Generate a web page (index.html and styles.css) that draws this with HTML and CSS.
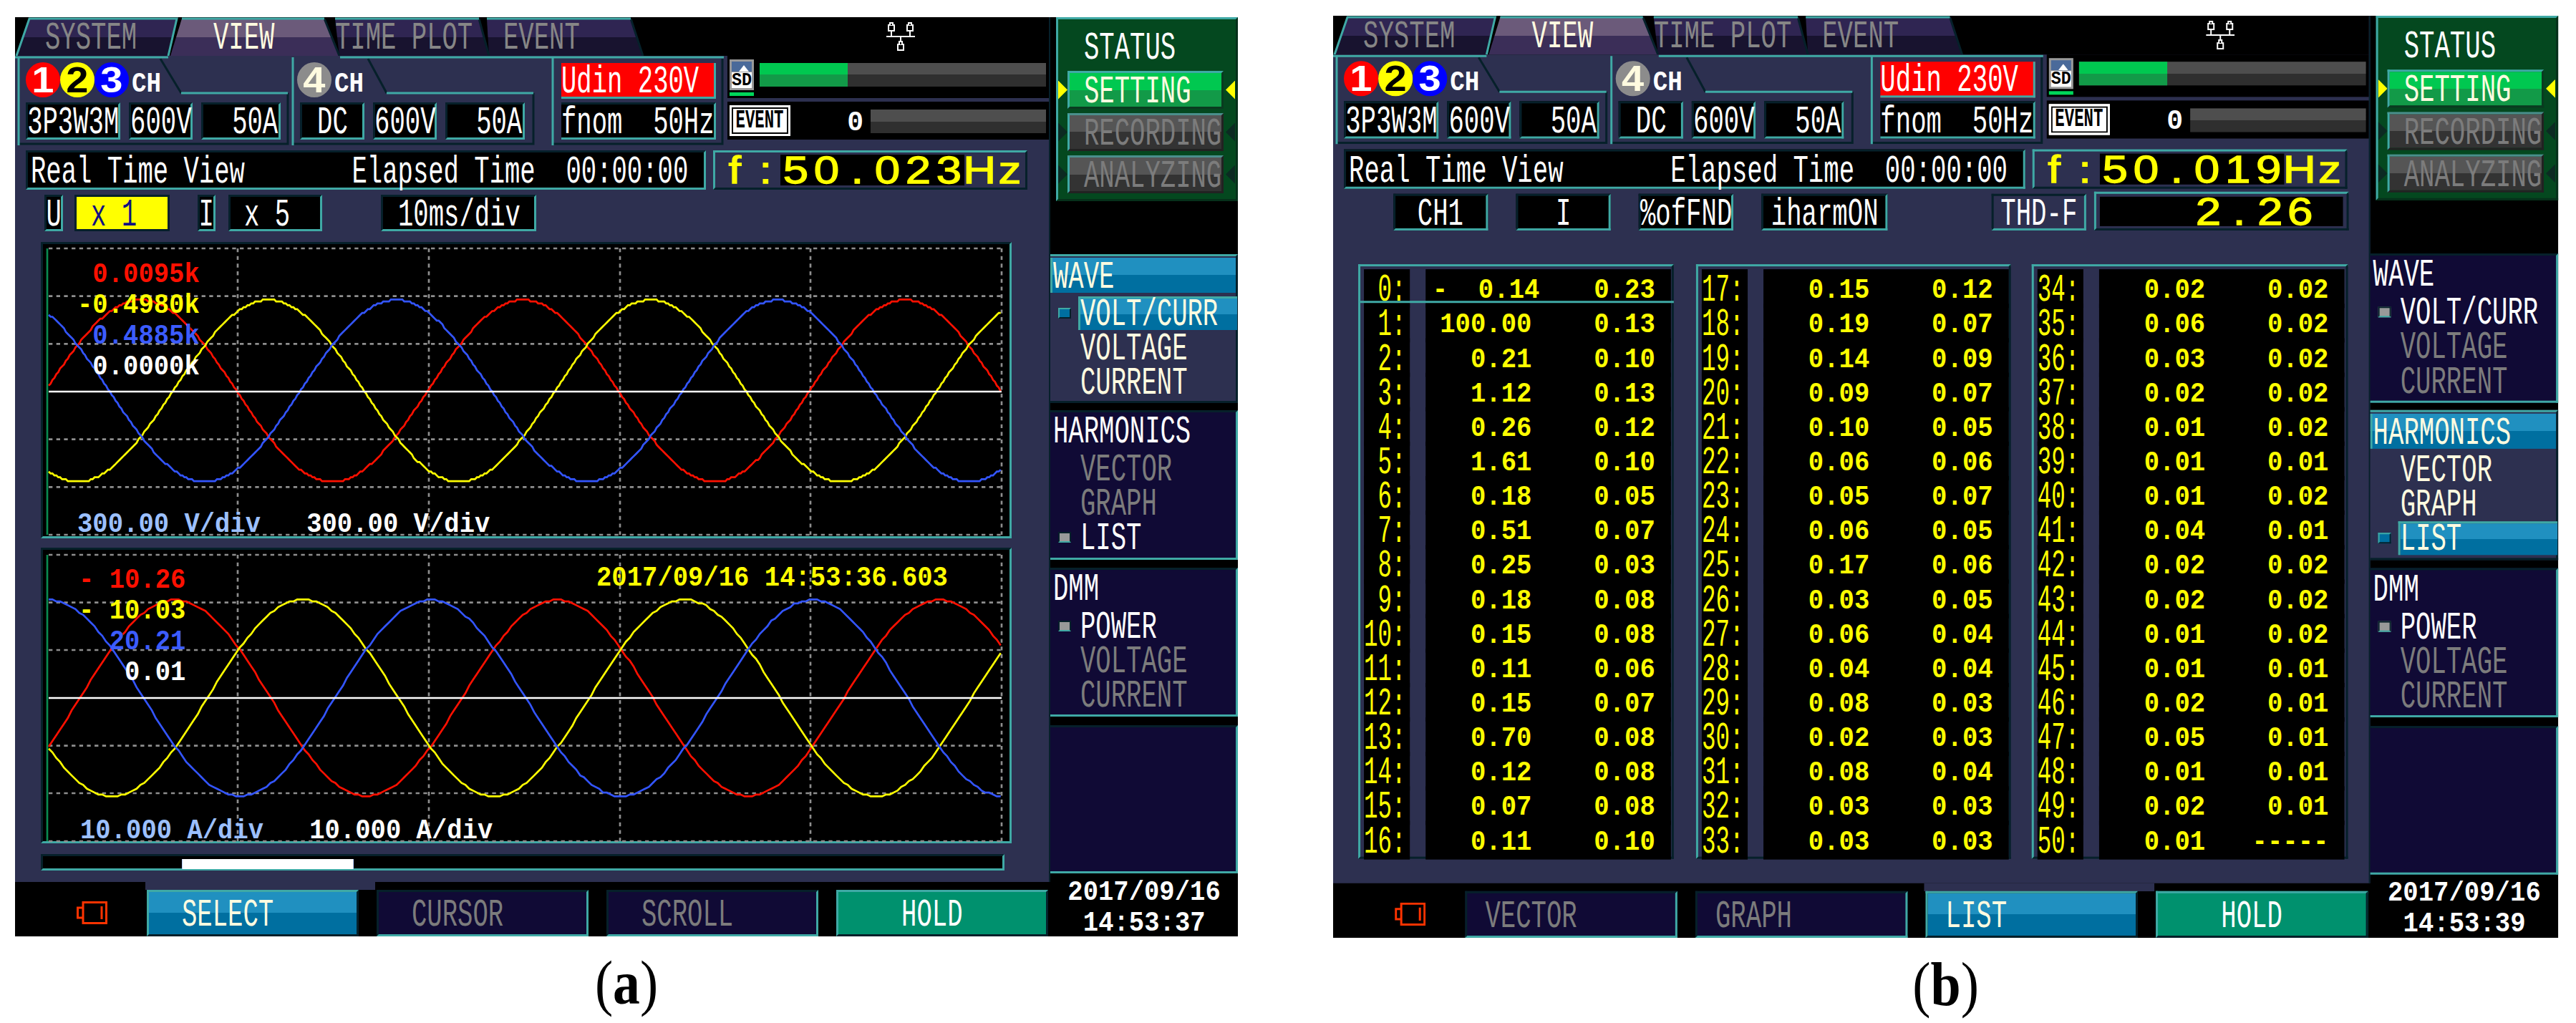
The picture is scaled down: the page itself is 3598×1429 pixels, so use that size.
FILE: index.html
```html
<!DOCTYPE html>
<html lang="en">
<head>
<meta charset="utf-8">
<title>Power analyzer screens</title>
<link rel="stylesheet" href="styles.css">
</head>
<body>
<div class="page">

<!-- ===================== (a) ===================== -->
<figure class="fig fig-a">
<div class="screen">
  <div class="main">
    <div class="tabs">
      <svg class="tabshape" width="900" height="54" viewBox="0 0 900 54">
        <defs>
          <linearGradient id="off-a" x1="0" y1="0" x2="0" y2="1"><stop offset=".5" stop-color="#2f2552"/><stop offset=".5" stop-color="#18132f"/></linearGradient>
          <linearGradient id="on-a" x1="0" y1="0" x2="0" y2="1"><stop offset=".5" stop-color="#6b5a7a"/><stop offset=".5" stop-color="#3b2e58"/></linearGradient>
        </defs>
        <polygon points="20,2 226,2 214,54 2,54" fill="url(#off-a)"/>
        <polygon points="447,2 648,2 662,54 453,54" fill="url(#off-a)"/>
        <polygon points="659,2 860,2 877,54 662,54" fill="url(#off-a)"/>
        <polygon points="233,2 432,2 453,54 217,54" fill="url(#on-a)"/>
        <path class="ln-d" d="M432 2L453 54M648 2L662 54M860 2L877 54"/>
        <path class="ln-t" d="M2 54L20 2H226L214 54M233 2H432M447 2H648M659 2H860"/>
      </svg>
      <span class="tl tl1 t off">SYSTEM</span>
      <span class="tl tl2 t on">VIEW</span>
      <span class="tl tl3 t off">TIME PLOT</span>
      <span class="tl t off">EVENT</span>
      <svg class="net" width="40" height="40" viewBox="0 0 40 40"><path class="ln-w" d="M0 20H40M7 12V20M33 12V20M20 20V31"/><rect class="ln-w" x="3" y="4" width="8" height="8"/><rect class="ln-w" x="29" y="4" width="8" height="8"/><rect class="ln-w" x="16" y="31" width="8" height="8"/><path class="ln-w" d="M5 4V1H9V4M31 4V1H35V4M18 31V27H22V31"/></svg>
    </div>

    <div class="chrow">
      <svg class="chlines" width="995" height="125" viewBox="0 0 995 125">
        <path class="ln-d" d="M203 4L232 52M381 52V123H5M493 4L519 52M724 52V123H388M751 123H988V4"/>
        <path class="ln-t" d="M0 2H214M454 2H990M5 2V125M232 52H381M388 2V125M519 52H724M751 2V125"/>
      </svg>
      <div class="grp g1">
        <div class="chhead"><span class="dot red"><span class="dg">1</span></span><span class="dot yel"><span class="dg">2</span></span><span class="dot blu"><span class="dg">3</span></span><span class="b chl">CH</span></div>
        <div class="flds"><div class="fld w132"><span class="tc">3P3W3M</span></div><div class="fld w89"><span class="tc">600V</span></div><div class="fld w111 fr"><span class="tr">50A</span></div></div>
      </div>
      <div class="grp g2">
        <div class="chhead ch4"><span class="dot gry"><span class="dg">4</span></span><span class="b chl">CH</span></div>
        <div class="flds"><div class="fld w90"><span class="tc">DC</span></div><div class="fld w89"><span class="tc">600V</span></div><div class="fld w111 fr"><span class="tr">50A</span></div></div>
      </div>
      <div class="grp g3">
        <div class="fld udin"><span class="t">Udin 230V</span></div>
        <div class="fld fnom"><span class="t">fnom  50Hz</span></div>
      </div>
      <div class="sd">
        <div class="sdtop">
          <div class="sdwrap"><div class="sdcard"><div class="sdhead"><i class="sdtri"></i></div><div class="sdtxt"><span class="b sdl">SD</span></div></div><div class="sdled"></div></div>
          <div class="meter"><div class="fill"></div></div>
        </div>
        <div class="sdbot">
          <div class="evt"><span class="evl">EVENT</span></div>
          <div class="zero"><span class="br">0</span></div>
          <div class="meter m2"></div>
        </div>
      </div>
    </div>

    <div class="rtrow">
      <div class="rtv"><span class="t">Real Time View       Elapsed Time  00:00:00</span></div>
      <div class="fbox"><span class="bc">f</span><span class="bc">:</span><div class="fdig"><span class="bc">5</span><span class="bc">0</span><span class="bc">.</span><span class="bc">0</span><span class="bc">2</span><span class="bc">3</span></div><span class="bc">H</span><span class="bc">z</span></div>
    </div>

    <div class="ctrl ctrl-a">
      <div class="fld cU"><span class="tc">U</span></div>
      <div class="fld cX yelbox"><span class="t">x 1</span></div>
      <div class="fld cI"><span class="tc">I</span></div>
      <div class="fld cX5"><span class="t">x 5</span></div>
      <div class="fld cT"><span class="t">10ms/div</span></div>
    </div>

    <div class="chart c1">
      <svg class="plot" width="1350" height="408" viewBox="0 0 1350 408" data-cy="205" data-amp="127" data-q="2.67" data-step="2.67" data-peaks="137,315,493">
        <path class="gh" d="M8 6H1339M8 72.7H1339M8 139.3H1339M8 272.7H1339M8 339.3H1339M8 406H1339"/>
        <path class="gv" d="M272 6V406M539 6V406M806 6V406M1072 6V406M1339 6V406"/>
        <path class="gl" d="M6 6V406"/>
        <g class="waves"></g>
        <path class="cl" d="M8 206H1339"/>
      </svg>
      <div class="labs la">
        <div class="b rd"> 0.0095k</div>
        <div class="b yl">-0.4980k</div>
        <div class="b bl"> 0.4885k</div>
        <div class="b wh"> 0.0000k</div>
      </div>
      <div class="b div1"><span class="lb">300.00 V/div</span>   <span class="wh">300.00 V/div</span></div>
    </div>

    <div class="chart c2">
      <svg class="plot" width="1350" height="407" viewBox="0 0 1350 407" data-cy="207" data-amp="137" data-q="2.67" data-step="5.34" data-peaks="185,363,541">
        <path class="gh" d="M8 7H1339M8 73.7H1339M8 140H1339M8 273.7H1339M8 340H1339M8 407H1339"/>
        <path class="gv" d="M272 7V407M539 7V407M806 7V407M1072 7V407M1339 7V407"/>
        <path class="gl" d="M6 7V407"/>
        <g class="waves"></g>
        <path class="cl" d="M8 207H1339"/>
      </svg>
      <div class="labs lb2">
        <div class="b rd">- 10.26</div>
        <div class="b yl">- 10.03</div>
        <div class="b bl">  20.21</div>
        <div class="b wh">   0.01</div>
      </div>
      <div class="b stamp">2017/09/16 14:53:36.603</div>
      <div class="b div2"><span class="lb">10.000 A/div</span>   <span class="wh">10.000 A/div</span></div>
    </div>

    <div class="scroll"><div class="thumb"></div></div>
  </div>

  <div class="side">
    <div class="status">
      <div class="sthead"><span class="t">STATUS</span></div>
      <div class="strow"><i class="arr al ay"></i><div class="stbtn act"><span class="t">SETTING</span></div><i class="arr ar ay"></i></div>
      <div class="strow"><i class="arr al"></i><div class="stbtn"><span class="t">RECORDING</span></div><i class="arr ar"></i></div>
      <div class="strow"><i class="arr al"></i><div class="stbtn"><span class="t">ANALYZING</span></div><i class="arr ar"></i></div>
    </div>
    <div class="mblock m1 on">
      <div class="mhead act"><span class="t">WAVE</span></div>
      <div class="mitem"><i class="mk mk-on"></i><div class="sel"><span class="t">VOLT/CURR</span></div></div>
      <div class="mitem"><i class="mk none"></i><span class="t">VOLTAGE</span></div>
      <div class="mitem"><i class="mk none"></i><span class="t">CURRENT</span></div>
    </div>
    <div class="mblock m2b">
      <div class="mhead"><span class="t">HARMONICS</span></div>
      <div class="mitem"><i class="mk none"></i><span class="t dim">VECTOR</span></div>
      <div class="mitem"><i class="mk none"></i><span class="t dim">GRAPH</span></div>
      <div class="mitem"><i class="mk"></i><span class="t">LIST</span></div>
    </div>
    <div class="mblock m3">
      <div class="mhead"><span class="t">DMM</span></div>
      <div class="mitem"><i class="mk"></i><span class="t">POWER</span></div>
      <div class="mitem"><i class="mk none"></i><span class="t dim">VOLTAGE</span></div>
      <div class="mitem"><i class="mk none"></i><span class="t dim">CURRENT</span></div>
    </div>
    <div class="mblock m4"></div>
    <div class="date"><span class="bd">2017/09/16</span><span class="bd">14:53:37</span></div>
  </div>

  <div class="bar">
    <div class="bicon"><svg width="43" height="32" viewBox="0 0 43 32"><path class="bat" d="M9 9H1.5V23H9M9 1.5H41.5V30.5H9ZM35 7V25"/></svg></div>
    <div class="bcell cn"><div class="bbtn on"><span class="t">SELECT</span></div></div>
    <div class="bcell"><div class="bbtn"><span class="t dim">CURSOR</span></div></div>
    <div class="bcell"><div class="bbtn"><span class="t dim">SCROLL</span></div></div>
    <div class="bcell"><div class="bbtn hold"><span class="tc">HOLD</span></div></div>
  </div>
</div>
<figcaption class="cap">(<b>a</b>)</figcaption>
</figure>

<!-- ===================== (b) ===================== -->
<figure class="fig fig-b">
<div class="screen">
  <div class="main">
    <div class="tabs">
      <svg class="tabshape" width="900" height="54" viewBox="0 0 900 54">
        <defs>
          <linearGradient id="off-b" x1="0" y1="0" x2="0" y2="1"><stop offset=".5" stop-color="#2f2552"/><stop offset=".5" stop-color="#18132f"/></linearGradient>
          <linearGradient id="on-b" x1="0" y1="0" x2="0" y2="1"><stop offset=".5" stop-color="#6b5a7a"/><stop offset=".5" stop-color="#3b2e58"/></linearGradient>
        </defs>
        <polygon points="20,2 226,2 214,54 2,54" fill="url(#off-b)"/>
        <polygon points="447,2 648,2 662,54 453,54" fill="url(#off-b)"/>
        <polygon points="659,2 860,2 877,54 662,54" fill="url(#off-b)"/>
        <polygon points="233,2 432,2 453,54 217,54" fill="url(#on-b)"/>
        <path class="ln-d" d="M432 2L453 54M648 2L662 54M860 2L877 54"/>
        <path class="ln-t" d="M2 54L20 2H226L214 54M233 2H432M447 2H648M659 2H860"/>
      </svg>
      <span class="tl tl1 t off">SYSTEM</span>
      <span class="tl tl2 t on">VIEW</span>
      <span class="tl tl3 t off">TIME PLOT</span>
      <span class="tl t off">EVENT</span>
      <svg class="net" width="40" height="40" viewBox="0 0 40 40"><path class="ln-w" d="M0 20H40M7 12V20M33 12V20M20 20V31"/><rect class="ln-w" x="3" y="4" width="8" height="8"/><rect class="ln-w" x="29" y="4" width="8" height="8"/><rect class="ln-w" x="16" y="31" width="8" height="8"/><path class="ln-w" d="M5 4V1H9V4M31 4V1H35V4M18 31V27H22V31"/></svg>
    </div>

    <div class="chrow">
      <svg class="chlines" width="995" height="125" viewBox="0 0 995 125">
        <path class="ln-d" d="M203 4L232 52M381 52V123H5M493 4L519 52M724 52V123H388M751 123H988V4"/>
        <path class="ln-t" d="M0 2H214M454 2H990M5 2V125M232 52H381M388 2V125M519 52H724M751 2V125"/>
      </svg>
      <div class="grp g1">
        <div class="chhead"><span class="dot red"><span class="dg">1</span></span><span class="dot yel"><span class="dg">2</span></span><span class="dot blu"><span class="dg">3</span></span><span class="b chl">CH</span></div>
        <div class="flds"><div class="fld w132"><span class="tc">3P3W3M</span></div><div class="fld w89"><span class="tc">600V</span></div><div class="fld w111 fr"><span class="tr">50A</span></div></div>
      </div>
      <div class="grp g2">
        <div class="chhead ch4"><span class="dot gry"><span class="dg">4</span></span><span class="b chl">CH</span></div>
        <div class="flds"><div class="fld w90"><span class="tc">DC</span></div><div class="fld w89"><span class="tc">600V</span></div><div class="fld w111 fr"><span class="tr">50A</span></div></div>
      </div>
      <div class="grp g3">
        <div class="fld udin"><span class="t">Udin 230V</span></div>
        <div class="fld fnom"><span class="t">fnom  50Hz</span></div>
      </div>
      <div class="sd">
        <div class="sdtop">
          <div class="sdwrap"><div class="sdcard"><div class="sdhead"><i class="sdtri"></i></div><div class="sdtxt"><span class="b sdl">SD</span></div></div><div class="sdled"></div></div>
          <div class="meter"><div class="fill"></div></div>
        </div>
        <div class="sdbot">
          <div class="evt"><span class="evl">EVENT</span></div>
          <div class="zero"><span class="br">0</span></div>
          <div class="meter m2"></div>
        </div>
      </div>
    </div>

    <div class="rtrow">
      <div class="rtv"><span class="t">Real Time View       Elapsed Time  00:00:00</span></div>
      <div class="fbox"><span class="bc">f</span><span class="bc">:</span><div class="fdig"><span class="bc">5</span><span class="bc">0</span><span class="bc">.</span><span class="bc">0</span><span class="bc">1</span><span class="bc">9</span></div><span class="bc">H</span><span class="bc">z</span></div>
    </div>

    <div class="ctrl ctrl-b">
      <div class="fld w132"><span class="tc">CH1</span></div>
      <div class="fld w132"><span class="tc">I</span></div>
      <div class="fld w132"><span class="tc">%ofFND</span></div>
      <div class="fld w176"><span class="tc">iharmON</span></div>
      <div class="fld thd"><span class="tc">THD-F</span></div>
      <div class="thdval"><div class="thdin"><span class="bc">2</span><span class="bc">.</span><span class="bc">2</span><span class="bc">6</span></div></div>
    </div>

    <div class="boxes">
      <div class="box">
        <div class="row cur"><div class="idx"><span class="i"> 0:</span></div><div class="vals"><span class="v v1">-  0.14</span><span class="v v2">0.23</span></div></div>
        <div class="row"><div class="idx"><span class="i"> 1:</span></div><div class="vals"><span class="v v1">100.00</span><span class="v v2">0.13</span></div></div>
        <div class="row"><div class="idx"><span class="i"> 2:</span></div><div class="vals"><span class="v v1">0.21</span><span class="v v2">0.10</span></div></div>
        <div class="row"><div class="idx"><span class="i"> 3:</span></div><div class="vals"><span class="v v1">1.12</span><span class="v v2">0.13</span></div></div>
        <div class="row"><div class="idx"><span class="i"> 4:</span></div><div class="vals"><span class="v v1">0.26</span><span class="v v2">0.12</span></div></div>
        <div class="row"><div class="idx"><span class="i"> 5:</span></div><div class="vals"><span class="v v1">1.61</span><span class="v v2">0.10</span></div></div>
        <div class="row"><div class="idx"><span class="i"> 6:</span></div><div class="vals"><span class="v v1">0.18</span><span class="v v2">0.05</span></div></div>
        <div class="row"><div class="idx"><span class="i"> 7:</span></div><div class="vals"><span class="v v1">0.51</span><span class="v v2">0.07</span></div></div>
        <div class="row"><div class="idx"><span class="i"> 8:</span></div><div class="vals"><span class="v v1">0.25</span><span class="v v2">0.03</span></div></div>
        <div class="row"><div class="idx"><span class="i"> 9:</span></div><div class="vals"><span class="v v1">0.18</span><span class="v v2">0.08</span></div></div>
        <div class="row"><div class="idx"><span class="i">10:</span></div><div class="vals"><span class="v v1">0.15</span><span class="v v2">0.08</span></div></div>
        <div class="row"><div class="idx"><span class="i">11:</span></div><div class="vals"><span class="v v1">0.11</span><span class="v v2">0.06</span></div></div>
        <div class="row"><div class="idx"><span class="i">12:</span></div><div class="vals"><span class="v v1">0.15</span><span class="v v2">0.07</span></div></div>
        <div class="row"><div class="idx"><span class="i">13:</span></div><div class="vals"><span class="v v1">0.70</span><span class="v v2">0.08</span></div></div>
        <div class="row"><div class="idx"><span class="i">14:</span></div><div class="vals"><span class="v v1">0.12</span><span class="v v2">0.08</span></div></div>
        <div class="row"><div class="idx"><span class="i">15:</span></div><div class="vals"><span class="v v1">0.07</span><span class="v v2">0.08</span></div></div>
        <div class="row"><div class="idx"><span class="i">16:</span></div><div class="vals"><span class="v v1">0.11</span><span class="v v2">0.10</span></div></div>
      </div>
      <div class="box">
        <div class="row"><div class="idx"><span class="i">17:</span></div><div class="vals"><span class="v v1">0.15</span><span class="v v2">0.12</span></div></div>
        <div class="row"><div class="idx"><span class="i">18:</span></div><div class="vals"><span class="v v1">0.19</span><span class="v v2">0.07</span></div></div>
        <div class="row"><div class="idx"><span class="i">19:</span></div><div class="vals"><span class="v v1">0.14</span><span class="v v2">0.09</span></div></div>
        <div class="row"><div class="idx"><span class="i">20:</span></div><div class="vals"><span class="v v1">0.09</span><span class="v v2">0.07</span></div></div>
        <div class="row"><div class="idx"><span class="i">21:</span></div><div class="vals"><span class="v v1">0.10</span><span class="v v2">0.05</span></div></div>
        <div class="row"><div class="idx"><span class="i">22:</span></div><div class="vals"><span class="v v1">0.06</span><span class="v v2">0.06</span></div></div>
        <div class="row"><div class="idx"><span class="i">23:</span></div><div class="vals"><span class="v v1">0.05</span><span class="v v2">0.07</span></div></div>
        <div class="row"><div class="idx"><span class="i">24:</span></div><div class="vals"><span class="v v1">0.06</span><span class="v v2">0.05</span></div></div>
        <div class="row"><div class="idx"><span class="i">25:</span></div><div class="vals"><span class="v v1">0.17</span><span class="v v2">0.06</span></div></div>
        <div class="row"><div class="idx"><span class="i">26:</span></div><div class="vals"><span class="v v1">0.03</span><span class="v v2">0.05</span></div></div>
        <div class="row"><div class="idx"><span class="i">27:</span></div><div class="vals"><span class="v v1">0.06</span><span class="v v2">0.04</span></div></div>
        <div class="row"><div class="idx"><span class="i">28:</span></div><div class="vals"><span class="v v1">0.04</span><span class="v v2">0.04</span></div></div>
        <div class="row"><div class="idx"><span class="i">29:</span></div><div class="vals"><span class="v v1">0.08</span><span class="v v2">0.03</span></div></div>
        <div class="row"><div class="idx"><span class="i">30:</span></div><div class="vals"><span class="v v1">0.02</span><span class="v v2">0.03</span></div></div>
        <div class="row"><div class="idx"><span class="i">31:</span></div><div class="vals"><span class="v v1">0.08</span><span class="v v2">0.04</span></div></div>
        <div class="row"><div class="idx"><span class="i">32:</span></div><div class="vals"><span class="v v1">0.03</span><span class="v v2">0.03</span></div></div>
        <div class="row"><div class="idx"><span class="i">33:</span></div><div class="vals"><span class="v v1">0.03</span><span class="v v2">0.03</span></div></div>
      </div>
      <div class="box">
        <div class="row"><div class="idx"><span class="i">34:</span></div><div class="vals"><span class="v v1">0.02</span><span class="v v2">0.02</span></div></div>
        <div class="row"><div class="idx"><span class="i">35:</span></div><div class="vals"><span class="v v1">0.06</span><span class="v v2">0.02</span></div></div>
        <div class="row"><div class="idx"><span class="i">36:</span></div><div class="vals"><span class="v v1">0.03</span><span class="v v2">0.02</span></div></div>
        <div class="row"><div class="idx"><span class="i">37:</span></div><div class="vals"><span class="v v1">0.02</span><span class="v v2">0.02</span></div></div>
        <div class="row"><div class="idx"><span class="i">38:</span></div><div class="vals"><span class="v v1">0.01</span><span class="v v2">0.02</span></div></div>
        <div class="row"><div class="idx"><span class="i">39:</span></div><div class="vals"><span class="v v1">0.01</span><span class="v v2">0.01</span></div></div>
        <div class="row"><div class="idx"><span class="i">40:</span></div><div class="vals"><span class="v v1">0.01</span><span class="v v2">0.02</span></div></div>
        <div class="row"><div class="idx"><span class="i">41:</span></div><div class="vals"><span class="v v1">0.04</span><span class="v v2">0.01</span></div></div>
        <div class="row"><div class="idx"><span class="i">42:</span></div><div class="vals"><span class="v v1">0.02</span><span class="v v2">0.02</span></div></div>
        <div class="row"><div class="idx"><span class="i">43:</span></div><div class="vals"><span class="v v1">0.02</span><span class="v v2">0.02</span></div></div>
        <div class="row"><div class="idx"><span class="i">44:</span></div><div class="vals"><span class="v v1">0.01</span><span class="v v2">0.02</span></div></div>
        <div class="row"><div class="idx"><span class="i">45:</span></div><div class="vals"><span class="v v1">0.01</span><span class="v v2">0.01</span></div></div>
        <div class="row"><div class="idx"><span class="i">46:</span></div><div class="vals"><span class="v v1">0.02</span><span class="v v2">0.01</span></div></div>
        <div class="row"><div class="idx"><span class="i">47:</span></div><div class="vals"><span class="v v1">0.05</span><span class="v v2">0.01</span></div></div>
        <div class="row"><div class="idx"><span class="i">48:</span></div><div class="vals"><span class="v v1">0.01</span><span class="v v2">0.01</span></div></div>
        <div class="row"><div class="idx"><span class="i">49:</span></div><div class="vals"><span class="v v1">0.02</span><span class="v v2">0.01</span></div></div>
        <div class="row"><div class="idx"><span class="i">50:</span></div><div class="vals"><span class="v v1">0.01</span><span class="v v2">-----</span></div></div>
      </div>
    </div>
  </div>

  <div class="side">
    <div class="status">
      <div class="sthead"><span class="t">STATUS</span></div>
      <div class="strow"><i class="arr al ay"></i><div class="stbtn act"><span class="t">SETTING</span></div><i class="arr ar ay"></i></div>
      <div class="strow"><i class="arr al"></i><div class="stbtn"><span class="t">RECORDING</span></div><i class="arr ar"></i></div>
      <div class="strow"><i class="arr al"></i><div class="stbtn"><span class="t">ANALYZING</span></div><i class="arr ar"></i></div>
    </div>
    <div class="mblock m1">
      <div class="mhead"><span class="t">WAVE</span></div>
      <div class="mitem"><i class="mk"></i><span class="t">VOLT/CURR</span></div>
      <div class="mitem"><i class="mk none"></i><span class="t dim">VOLTAGE</span></div>
      <div class="mitem"><i class="mk none"></i><span class="t dim">CURRENT</span></div>
    </div>
    <div class="mblock m2b on">
      <div class="mhead act"><span class="t">HARMONICS</span></div>
      <div class="mitem"><i class="mk none"></i><span class="t">VECTOR</span></div>
      <div class="mitem"><i class="mk none"></i><span class="t">GRAPH</span></div>
      <div class="mitem"><i class="mk mk-on"></i><div class="sel"><span class="t">LIST</span></div></div>
    </div>
    <div class="mblock m3">
      <div class="mhead"><span class="t">DMM</span></div>
      <div class="mitem"><i class="mk"></i><span class="t">POWER</span></div>
      <div class="mitem"><i class="mk none"></i><span class="t dim">VOLTAGE</span></div>
      <div class="mitem"><i class="mk none"></i><span class="t dim">CURRENT</span></div>
    </div>
    <div class="mblock m4"></div>
    <div class="date"><span class="bd">2017/09/16</span><span class="bd">14:53:39</span></div>
  </div>

  <div class="bar">
    <div class="bicon"><svg width="43" height="32" viewBox="0 0 43 32"><path class="bat" d="M9 9H1.5V23H9M9 1.5H41.5V30.5H9ZM35 7V25"/></svg></div>
    <div class="bcell"><div class="bbtn sm"><span class="t dim">VECTOR</span></div></div>
    <div class="bcell"><div class="bbtn sm"><span class="t dim">GRAPH</span></div></div>
    <div class="bcell cn"><div class="bbtn on sm"><span class="t">LIST</span></div></div>
    <div class="bcell"><div class="bbtn hold"><span class="tc">HOLD</span></div></div>
  </div>
</div>
<figcaption class="cap">(<b>b</b>)</figcaption>
</figure>

</div>
<script src="script.js"></script>
</body>
</html>
```
FILE: styles.css
```css
* { box-sizing: border-box; }
html, body { margin: 0; padding: 0; background: #fff; }
.page { width: 3598px; height: 1429px; display: flex; gap: 133px; padding-left: 21px; overflow: hidden; }
.fig { margin: 24px 0 0; width: 1708px; flex: none; }
.fig-b { margin-top: 22px; transform: scale(1.0018, 1.0031); transform-origin: 0 0; }
.cap { font: 400 86px/1 "Liberation Serif", serif; text-align: center; margin-top: 22px; transform: scaleX(.88); color: #000; }
.cap b { font-weight: 700; }

.screen { width: 1708px; height: 1284px; background: #000; display: grid; grid-template-columns: 1446px 262px; grid-template-rows: 1208px 76px; color: #fff; }

/* text helpers: the instrument's narrow 8x16 bitmap font */
.t, .tc, .tr { display: block; flex: none; font: 400 54px/1 "Liberation Mono", monospace; white-space: pre; transform: translateY(3px) scaleX(.659); transform-origin: 0 50%; }
.tc { transform-origin: 50% 50%; }
.tr { transform-origin: 100% 50%; }
.b { display: block; font: 700 38px/1 "Liberation Mono", monospace; white-space: pre; transform: translateY(2.5px) scaleX(.936); transform-origin: 0 50%; }
.dim { color: #7c7c7c; }
.off { color: #868686; }
.on { color: #fffbe0; }

/* main column */
.main { grid-column: 1; grid-row: 1; background: #2d3050; border-right: 2px solid #06202a; display: flex; flex-direction: column; }
.tabs { position: relative; height: 54px; background: #000; display: flex; align-items: center; flex: none; }
.tabshape { position: absolute; left: 0; top: 0; }
.tl { position: relative; }
.tl1 { margin-left: 42px; width: 235px; }
.tl2 { width: 170px; }
.tl3 { width: 235px; }
.net { margin-left: auto; margin-right: 187px; position: relative; }
.ln-t { fill: none; stroke: #3fa9a5; stroke-width: 3; }
.ln-d { fill: none; stroke: #06202a; stroke-width: 3; }
.ln-w { fill: #000; stroke: #fff; stroke-width: 2; }

.chrow { position: relative; height: 125px; display: flex; flex: none; }
.chlines { position: absolute; left: 0; top: 0; }
.grp { position: relative; }
.g1 { margin-left: 5px; width: 376px; padding: 9px 0 0 10px; }
.g2 { margin-left: 7px; width: 336px; padding: 9px 0 0 10px; }
.g3 { margin-left: 27px; width: 237px; padding: 10px 0 0 12px; }
.chhead { display: flex; align-items: center; height: 49px; margin-bottom: 7px; }
.ch4 { margin-left: -4px; }
.dot { width: 48px; height: 49px; border-radius: 50%; display: flex; align-items: center; justify-content: center; flex: none; }
.dg { display: block; flex: none; font: 700 50px/1 "Liberation Sans", sans-serif; transform: scaleX(1.12); }
.red { background: #f00; color: #fff; }
.yel { background: #ff0; color: #000; }
.blu { background: #00f; color: #fff; }
.gry { background: #8c8c8c; color: #fffbe0; }
.chl { margin: 12px 0 0 4px; transform: scaleX(.9); }
.flds { display: flex; gap: 12px; }
.fld { height: 52px; background: #000; border-style: solid; border-width: 3px; border-color: #06202a #3fa9a5 #3fa9a5 #06202a; display: flex; align-items: center; justify-content: center; flex: none; }
.fr { justify-content: flex-end; padding-right: 1px; }
.w132 { width: 132px; } .w89 { width: 89px; } .w90 { width: 90px; } .w111 { width: 111px; } .w176 { width: 176px; }
.udin { width: 216px; height: 50px; background: #f00; margin-bottom: 5px; justify-content: flex-start; border-color: #7a0000 #3fa9a5 #3fa9a5 #7a0000; border-top-width: 0; border-left-width: 0; }
.fnom { width: 216px; justify-content: flex-start; border-left-width: 0; }

.sd { margin-left: 7px; width: 449px; height: 117px; display: flex; flex-direction: column; justify-content: space-between; }
.sdtop { height: 59px; background: #000; display: flex; padding-left: 3px; }
.sdbot { height: 53px; background: #000; display: flex; align-items: flex-start; padding: 5px 0 0 3px; }
.sdwrap { width: 34px; margin: 5px 8px 0 0; }
.sdcard { height: 43px; background: #9a9a9a; padding: 3px; display: flex; flex-direction: column; }
.sdhead { height: 14px; background: #4a6a9a; display: flex; justify-content: flex-end; align-items: flex-end; padding-right: 4px; }
.sdtri { width: 14px; height: 9px; background: #fff; clip-path: polygon(50% 0, 100% 100%, 0 100%); }
.sdtxt { height: 22px; margin-top: 1px; background: #fff; color: #000; display: flex; align-items: center; }
.sdl { font-size: 26px; transform: scaleX(.9); }
.sdled { height: 5px; margin-top: 3px; background: #00d65a; }
.meter { width: 400px; height: 33px; margin-top: 10px; background: linear-gradient(#4e4e4e 50%, #2f2f2f 50%); }
.fill { width: 123px; height: 100%; background: linear-gradient(#00c850 50%, #129a48 50%); }
.m2 { width: 245px; margin-top: 6px; }
.evt { width: 85px; height: 43px; background: #fff; border: 3px solid #fff; box-shadow: inset 0 0 0 2px #000; display: flex; align-items: center; justify-content: center; color: #000; flex: none; }
.evl { font: 700 36px/1 "Liberation Mono", monospace; transform: scaleX(.62); flex: none; }
.zero { width: 112px; height: 43px; display: flex; align-items: center; justify-content: flex-end; padding-right: 10px; flex: none; }
.br { font: 700 38px/1 "Liberation Mono", monospace; transform: translateY(2.5px); }

.rtrow { display: flex; margin: 7px 0 0 15px; gap: 10px; height: 55px; flex: none; }
.rtv { width: 950px; background: #000; border-style: solid; border-width: 3px; border-color: #06202a #3fa9a5 #3fa9a5 #06202a; display: flex; align-items: center; padding-left: 4px; }
.fbox { width: 439px; border-style: solid; border-width: 3px; border-color: #3fa9a5 #06202a #06202a #3fa9a5; display: flex; align-items: center; padding-left: 6px; color: #ff0; }
.fdig { display: flex; background: #000; height: 43px; align-items: center; }
.bc { display: block; width: 42.7px; flex: none; text-align: center; font: 400 53px/1 "Liberation Sans", sans-serif; -webkit-text-stroke: 1.3px currentColor; transform: scaleX(1.2); }

.ctrl { display: flex; margin-top: 7px; height: 51px; flex: none; }
.ctrl .fld { height: 51px; }
.ctrl-a { padding-left: 41px; }
.cU { width: 26px; margin-right: 16px; }
.cX { width: 133px; margin-right: 39px; justify-content: flex-start; padding-left: 20px; }
.yelbox { background: #ff0; color: #101080; border-color: #06202a #06202a #06202a #06202a; }
.cI { width: 25px; margin-right: 18px; }
.cX5 { width: 131px; margin-right: 82px; justify-content: flex-start; padding-left: 19px; }
.cT { width: 217px; justify-content: flex-start; padding-left: 21px; }
.ctrl-b { padding-left: 84px; gap: 39px; }
.ctrl-b .thd { background: #2d3050; width: 132px; margin-left: 106px; margin-right: -28px; }
.thdval { width: 355px; height: 54px; margin-top: -3px; border-style: solid; border-width: 3px; border-color: #3fa9a5 #06202a #06202a #3fa9a5; padding: 4px 5px 3px; flex: none; }
.thdin { background: #000; height: 100%; display: flex; align-items: center; justify-content: flex-end; padding-right: 38px; color: #ff0; }

/* charts */
.chart { position: relative; margin-left: 36px; width: 1356px; height: 414px; background: #000; border-style: solid; border-width: 3px; border-color: #06202a #3fa9a5 #3fa9a5 #06202a; flex: none; }
.c1 { margin-top: 15px; }
.c2 { margin-top: 13px; height: 413px; }
.plot { display: block; overflow: visible; }
.gh { fill: none; stroke: #8e8e8e; stroke-width: 2.67; stroke-dasharray: 5.34 5.34; }
.gv { fill: none; stroke: #8e8e8e; stroke-width: 2.67; stroke-dasharray: 5.34 5.34; }
.gl { fill: none; stroke: #0a8a50; stroke-width: 2.67; }
.cl { fill: none; stroke: #fff; stroke-width: 2.67; }
.w { fill: none; stroke-width: 2.67; stroke-linejoin: miter; }
.w0 { stroke: #ff1000; }
.w1 { stroke: #ffff00; }
.w2 { stroke: #3355ff; }
.labs { position: absolute; top: 18px; display: flex; flex-direction: column; }
.labs .b { height: 43px; line-height: 43px; }
.la { left: 48px; }
.lb2 { left: 50px; }
.rd { color: #ff1000; } .yl { color: #ff0; } .bl { color: #3c5cff; } .wh { color: #fff; } .lb { color: #9cc0ff; }
.div1 { position: absolute; left: 48px; top: 370px; }
.div2 { position: absolute; left: 52px; top: 371px; }
.stamp { position: absolute; left: 773px; top: 18px; color: #ff0; }
.scroll { margin: 15px 0 0 36px; width: 1346px; height: 23px; background: #000; border-style: solid; border-width: 3px; border-color: #06202a #3fa9a5 #3fa9a5 #06202a; flex: none; padding: 4px 0 0 194px; }
.thumb { width: 240px; height: 14px; background: #fff; box-shadow: inset 1px 0 0 #b8d0ff, inset -1px 0 0 #b8d0ff; }

/* table */
.boxes { display: flex; margin: 47px 0 0 35px; flex: none; }
.box { width: 440px; height: 828px; border-style: solid; border-width: 3px; border-color: #3fa9a5 #06202a #06202a #3fa9a5; padding: 4px 0 0 5px; margin-right: 31px; flex: none; }
.box:nth-child(2) { width: 439px; margin-right: 29px; }
.box:nth-child(3) { width: 441px; margin-right: 0; }
.row { position: relative; display: grid; grid-template-columns: 64px 342px; column-gap: 22px; height: 43px; margin-bottom: 5px; }
.cur::after { content: ""; position: absolute; left: -5px; right: -3px; bottom: -4px; height: 3px; background: #3fa9a5; }
.idx { background: #000; display: flex; align-items: center; color: #ff0; overflow: visible; }
.i { display: block; flex: none; font: 400 54px/1 "Liberation Mono", monospace; white-space: pre; transform: translateY(3px) scaleX(.6); transform-origin: 0 50%; }
.vals { background: #000; display: flex; align-items: center; color: #ff0; }
.v { display: block; flex: none; font: 700 38px/1 "Liberation Mono", monospace; white-space: pre; text-align: right; transform: translateY(3px) scaleX(.936); transform-origin: 100% 50%; }
.v1 { width: 148px; }
.v2 { width: 172px; }

/* right column */
.side { grid-column: 2; grid-row: 1 / span 2; display: flex; flex-direction: column; }
.status { margin-left: 8px; width: 254px; height: 257px; flex: none; background: #04481f; border-style: solid; border-width: 3px; border-color: #3fa9a5 #06301a #06301a #3fa9a5; }
.sthead { height: 72px; padding: 4px 0 0 36px; display: flex; align-items: center; }
.strow { display: flex; align-items: center; gap: 0; height: 53px; margin-bottom: 6px; }
.stbtn { width: 218px; height: 53px; flex: none; border-style: solid; border-width: 3px; border-color: #4a8f8c #222 #222 #3fa9a5; background: linear-gradient(#555 50%, #333 50%); color: #7c7c7c; display: flex; align-items: center; padding-left: 20px; }
.stbtn.act { background: linear-gradient(#00c850 50%, #129a48 50%); color: #fffbe0; border-color: #3fa9a5 #0a3a20 #0a3a20 #3fa9a5; }
.arr { display: block; width: 13px; height: 26px; flex: none; background: #0c2a22; }
.al { clip-path: polygon(0 0, 100% 50%, 0 100%); }
.ar { clip-path: polygon(100% 0, 0 50%, 100% 100%); margin-left: 3px; }
.ay { background: #ff0; }

.mblock { flex: none; background: #100a35; border-style: solid; border-width: 3px; border-color: #06202a #3fa9a5 #3fa9a5 #06202a; border-left-width: 0; }
.mhead { height: 49px; display: flex; align-items: center; padding-left: 4px; }
.mitem { height: 48px; display: flex; align-items: center; }
.mhead + .mitem { margin-top: 5px; }
.mk { display: block; width: 18px; height: 15px; margin: 0 13px 0 11px; background: #999; border-style: solid; border-width: 2px; border-color: #06202a #06202a #3fa9a5 #06202a; flex: none; }
.mk.none { visibility: hidden; }
.mk-on { background: #006fa0; border-color: #3fa9a5 #06202a #06202a #3fa9a5; }
.m1 { margin-top: 74px; height: 208px; }
.m2b { margin-top: 10px; height: 209px; }
.m3 { margin-top: 11px; height: 208px; }
.m4 { margin-top: 12px; height: 207px; }
.mblock.on { background: #2d3050; border-color: #3fa9a5 #06202a #06202a #2d3050; }
.mhead.act { margin-top: 2px; background: linear-gradient(#2090c0 50%, #006fa0 50%); box-shadow: inset 3px 0 0 #3fa9a5; }
.mhead.act + .mitem { margin-top: 4px; }
.sel { flex: none; width: 222px; height: 47px; background: linear-gradient(#2090c0 50%, #006fa0 50%); border-top: 3px solid #3fa9a5; border-left: 3px solid #3fa9a5; display: flex; align-items: center; margin-left: -3px; padding-bottom: 4px; }
.date { flex: 1; display: flex; flex-direction: column; align-items: center; padding-top: 2px; }
.bd { display: block; height: 43px; font: 700 38px/43px "Liberation Mono", monospace; white-space: pre; transform: translateY(2.5px) scaleX(.936); }

/* bottom bar */
.bar { grid-column: 1; grid-row: 2; display: flex; height: 76px; }
.bicon { width: 182px; flex: none; padding: 27px 0 0 86px; }
.bat { fill: none; stroke: #ff3300; stroke-width: 3; }
.bcell { width: 321px; flex: none; padding: 11px 0 0 2px; }
.cn { background: linear-gradient(#2d3050 11px, #000 11px); }
.bbtn { width: 296px; height: 65px; background: #100a35; border-style: solid; border-width: 3px; border-color: #06202a #3fa9a5 #3fa9a5 #06202a; display: flex; align-items: center; padding-left: 46px; }
.bbtn.sm { padding-left: 25px; }
.bbtn.on { background: linear-gradient(#2090c0 50%, #006fa0 50%); border-color: #3fa9a5 #06202a #06202a #3fa9a5; color: #fffbe0; }
.hold { background: #00916e; border-color: #3fa9a5 #06202a #06202a #3fa9a5; justify-content: center; padding: 0 28px 0 0; }
```
FILE: script.js
```js
document.querySelectorAll('.plot').forEach(function (svg) {
  var cy = +svg.dataset.cy, amp = +svg.dataset.amp, q = +svg.dataset.q, step = +svg.dataset.step;
  var peaks = svg.dataset.peaks.split(',').map(Number);
  var period = 533.6;
  var g = svg.querySelector('.waves');
  peaks.forEach(function (peak, i) {
    var pts = [];
    for (var x = 8; x <= 1339; x += step) {
      var y = cy - amp * Math.cos(2 * Math.PI * (x - peak) / period);
      pts.push(x.toFixed(1) + ',' + (Math.round(y / q) * q).toFixed(1));
    }
    var line = document.createElementNS('http://www.w3.org/2000/svg', 'polyline');
    line.setAttribute('class', 'w w' + i);
    line.setAttribute('points', pts.join(' '));
    g.appendChild(line);
  });
});
```
